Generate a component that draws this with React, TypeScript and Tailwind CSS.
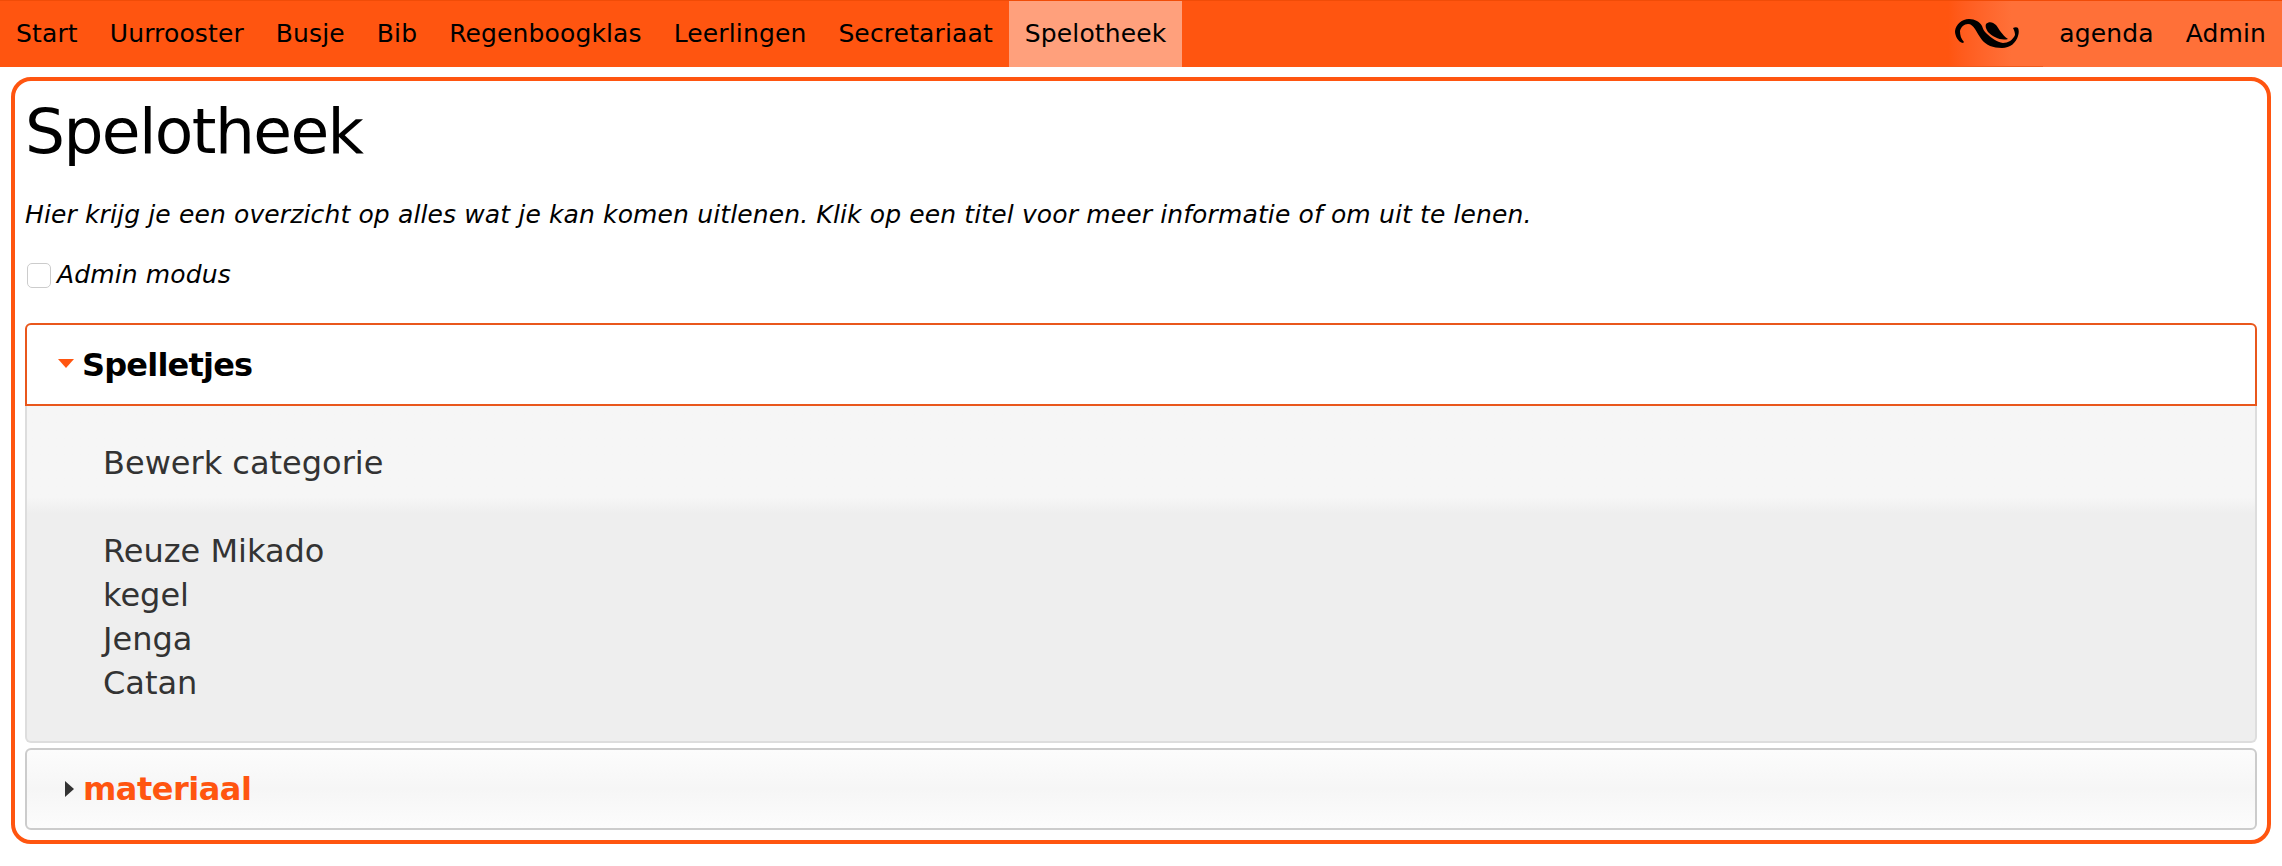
import React from 'react';

const leftItems = ['Start', 'Uurrooster', 'Busje', 'Bib', 'Regenboogklas', 'Leerlingen', 'Secretariaat'];
const games = ['Reuze Mikado', 'kegel', 'Jenga', 'Catan'];

const Logo = () => (
  <svg width="64" height="31" viewBox="0 0 64 31" className="block">
    <path
      d="M14 1C20 1 25 4 27 8C28 11 29 13 31 15C36 20 42 24 48 25C53 25 58 22 60 17C60 14 59 12 58 10C60 9 62 9 63 10C64 12 64 15 63 18C61 25 55 30 47 30C38 30 31 27 27 22C24 18 22 14 20 11C18 8 16 6 13 6C9 6 6 9 5 13C5 17 6 21 9 24L8 25C3 24 0 18 0 13C1 6 7 1 14 1Z"
      fill="#000"
    />
    <path d="M31 6C34 3 38 4 41 7C44 11 47 17 53 21C46 23 38 19 33 14C31 11 30 8 31 6Z" fill="#000" />
  </svg>
);

const App: React.FC = () => {
  return (
    <div className="min-h-screen bg-white font-['DejaVu_Sans',sans-serif] text-[25px] tracking-[0.13px] text-black">
      <nav className="flex h-[67px] items-stretch justify-between border-t border-t-[#f04c08] bg-[#ff5510]">
        <ul className="flex">
          {leftItems.map((item) => (
            <li key={item} className="flex items-center px-4">{item}</li>
          ))}
          <li className="flex items-center bg-[#ffa07c] px-4">Spelotheek</li>
        </ul>
        <ul className="flex">
          <li className="flex w-[105px] items-center border-b border-b-[#f05a1c] bg-gradient-to-r from-[#ff5510] from-10% to-[#ff7038] to-70% pl-[17px]">
            <Logo />
          </li>
          <li className="flex items-center bg-[#ff7038] px-4">agenda</li>
          <li className="flex items-center bg-[#ff7038] px-4">Admin</li>
        </ul>
      </nav>
      <main className="mx-[11px] mt-[10px] h-[767px] rounded-[20px] border-4 border-[#ff5510] px-[10px]">
        <h1 className="mt-[9px] text-[63px] leading-[84px] tracking-[-1.6px]">Spelotheek</h1>
        <p className="mt-[23px] italic leading-[36px]">
          Hier krijg je een overzicht op alles wat je kan komen uitlenen. Klik op een titel voor meer informatie of om uit te lenen.
        </p>
        <label className="mt-[24px] flex h-[36px] items-center italic">
          <span className="mr-[6px] ml-[2px] h-[25px] w-[24px] rounded-[5px] border border-[#ccc] bg-white" />
          Admin modus
        </label>
        <section className="mt-[30px]">
          <div className="flex h-[83px] items-center rounded-t-[6px] border-2 border-[#e9571c] bg-white pl-[31px]">
            <span className="mr-[8px] mb-[3px] h-0 w-0 border-x-[8px] border-t-[9px] border-x-transparent border-t-[#ff5510]" />
            <span className="text-[32px] font-bold tracking-[-0.8px]">Spelletjes</span>
          </div>
          <div className="h-[337px] rounded-b-[6px] border-x-2 border-b-2 border-[#ddd] bg-[#eeeeee] text-[32px] leading-[44px] tracking-normal text-[#333]">
            <div className="h-[107px] bg-gradient-to-b from-[#f6f6f6] via-[#f6f6f6] via-85% to-[#eeeeee] pt-[35px] pl-[76px]">Bewerk categorie</div>
            <div className="pt-[16px] pl-[76px]">
              {games.map((game) => (
                <div key={game}>{game}</div>
              ))}
            </div>
          </div>
        </section>
        <section className="mt-[5px]">
          <div className="flex h-[82px] items-center rounded-[6px] border-2 border-[#ccc] bg-gradient-to-b from-[#fcfcfc] via-[#f6f6f6] to-[#fcfcfc] pl-[38px]">
            <span className="mr-[9px] h-0 w-0 border-y-[8px] border-l-[9px] border-y-transparent border-l-[#333]" />
            <span className="text-[32px] font-bold tracking-[-0.5px] text-[#ff5510]">materiaal</span>
          </div>
        </section>
      </main>
    </div>
  );
};

export default App;
